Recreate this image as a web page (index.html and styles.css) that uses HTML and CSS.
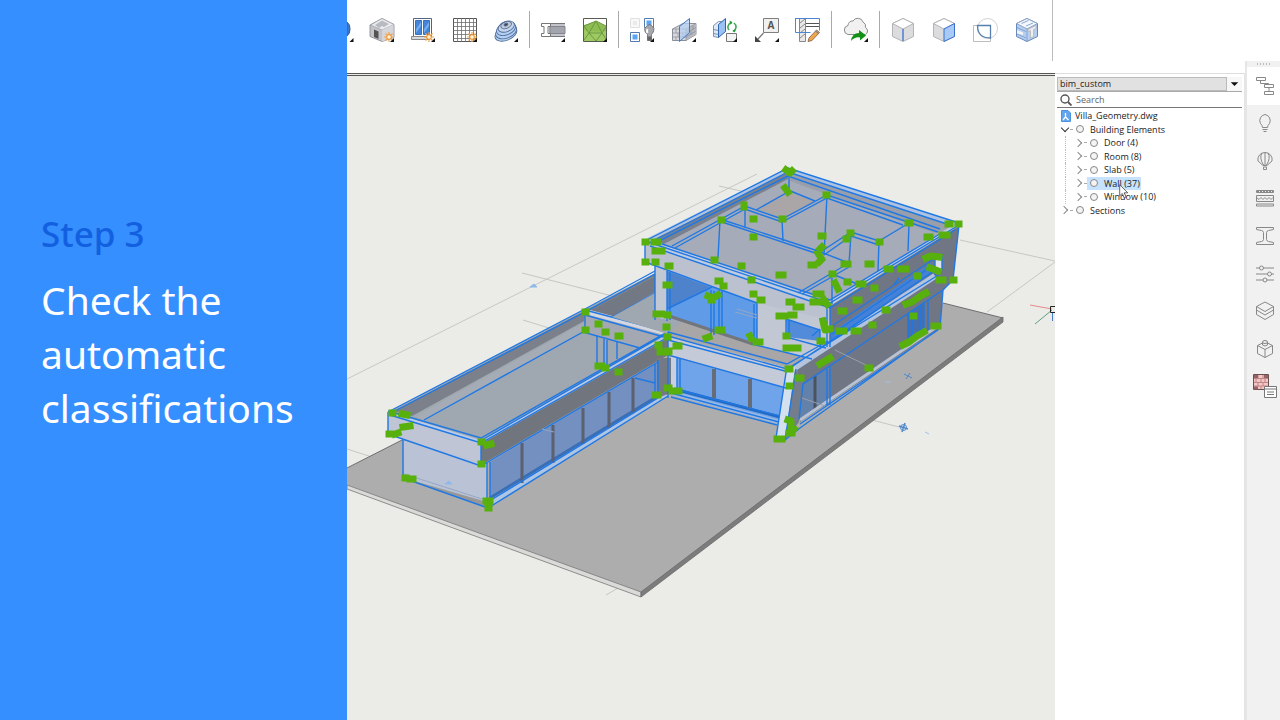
FILE: index.html
```html
<!DOCTYPE html>
<html lang="en">
<head>
<meta charset="utf-8">
<title>Step 3 – Check the automatic classifications</title>
<link rel="stylesheet" href="styles.css">
</head>
<body>
<svg class="defs" aria-hidden="true">
  <defs>
    <symbol id="tri" viewBox="0 0 26 26"><path d="M25 21v4h-4z" fill="#111"/></symbol>
    <symbol id="spark" viewBox="0 0 10 10"><path d="M5 0v10M0 5h10M1.500 1.500l7 7M8.500 1.500l-7 7" stroke="#f2a34a" stroke-width="1.200"/><circle cx="5" cy="5" r="2.300" fill="#fff4d8" stroke="#eb8f2c"/></symbol>
  </defs>
</svg>
<div class="page">
  <aside class="caption">
    <p class="step">Step 3</p>
    <h1 class="title">Check the automatic classifications</h1>
  </aside>
  <main class="app">
    <div class="toolbar" role="toolbar" aria-label="BIM tools">
      <button class="tool tool-cut" aria-label="Previous tool"><svg viewBox="0 0 14 26"><path d="M0 5a8 8 0 0 1 3 7a8 8 0 0 1-3 7z" fill="#3b78c8" stroke="#3d5f93"/><path d="M6.500 21v4h-4z" fill="#111"/></svg></button>
      <button class="tool" aria-label="Room"><svg viewBox="0 0 26 26"><path d="M1 8L13 1.500l12 6v13l-12 4-12-5z" fill="#c3c4ca" stroke="#85878f" stroke-width=".8"/><path d="M1.500 8l11.500 5 12-5.500-12-6z" fill="#ececef" stroke="#9a9ca3" stroke-width=".7"/><path d="M6 8l7-4.500v5.500l-3 2zM13 3.500l7 3.500-5 3-2-1z" fill="#b8bac2"/><path d="M13 13v11.500l11.500-4V7.500z" fill="#d5d6dc"/><path d="M5 20v-7.500l4.500 2v7.500z" fill="#565252"/><use href="#spark" x="15" y="15" width="10" height="10"/><use href="#tri"/></svg></button>
      <button class="tool" aria-label="Window"><svg viewBox="0 0 26 26"><path d="M3.500 1.500h18v18h-18z" fill="#fff" stroke="#53657f"/><path d="M5.500 3.500h6v14h-6zM13.500 3.500h6v14h-6z" fill="#4385d9" stroke="#3a70b9"/><path d="M6 12l5-7v4l-5 7zM14 12l5-7v4l-5 7z" fill="#76adf0"/><path d="M1.500 19.500h18v3h-18z" fill="#d8d9de" stroke="#888"/><use href="#spark" x="14" y="15" width="10" height="10"/><use href="#tri"/></svg></button>
      <button class="tool" aria-label="Grid"><svg viewBox="0 0 26 26"><path d="M1.500 1.500h23v23h-23z" fill="#fff" stroke="#555"/><path d="M5.500 1v24M9.500 1v24M13.500 1v24M17.500 1v24M21.500 1v24M1 5.500h24M1 9.500h24M1 13.500h24M1 17.500h24M1 21.500h24" stroke="#6d6d6d" stroke-width=".8"/><use href="#spark" x="15" y="15" width="10" height="10"/><use href="#tri"/></svg></button>
      <button class="tool" aria-label="Terrain"><svg viewBox="0 0 26 26"><g fill="#b4cff3" stroke="#506e98" stroke-width=".9" transform="rotate(-22 13 13)"><ellipse cx="11.500" cy="16.500" rx="11.500" ry="6.500"/><ellipse cx="12.500" cy="14.500" rx="11" ry="6.500"/><ellipse cx="13.500" cy="12" rx="10" ry="6"/><ellipse cx="14.500" cy="10" rx="8.500" ry="5" fill="#c5d6ee"/><ellipse cx="15" cy="8.500" rx="5.500" ry="3.300" fill="#c3cad5"/><ellipse cx="15" cy="8" rx="2" ry="1.200" fill="#444"/></g><use href="#tri"/></svg></button>
      <span class="sep"></span>
      <button class="tool" aria-label="Profile"><svg viewBox="0 0 26 26"><path d="M9 6h16v14H9z" fill="#c4c5ca"/><path d="M9 6.500h16M9 19.500h16" stroke="#75767c"/><path d="M10 9.500h15v7H10z" fill="#a3a5ae" stroke="#84858c"/><path d="M1.500 6.500h9v3H8v7h2.500v3h-9v-3H4v-7H1.500z" fill="#fff" stroke="#777"/><use href="#tri"/></svg></button>
      <button class="tool" aria-label="Topography"><svg viewBox="0 0 26 26"><path d="M1.500 1.500h23v23h-23z" fill="#fff" stroke="#565d50"/><path d="M2 8l4-1 8-3 10 5v15H2z" fill="#8ebd53"/><path d="M2 13q10 3 22 1v10H2z" fill="#9fca63"/><path d="M2 9l5 7L14 4l6 12 4-6M7 16h13M2 23l5-7 7 8 6-8 4 6M2 9l12-5 10 5" fill="none" stroke="#6b9a3f"/><use href="#tri"/></svg></button>
      <span class="sep"></span>
      <button class="tool" aria-label="Match properties"><svg viewBox="0 0 26 26"><path d="M1.500 1.500h9v9h-9z" fill="#f8f8f8" stroke="#e0e0e0"/><path d="M4 4h4v4H4z" fill="#eaeaea"/><path d="M1.500 15.500h9v9h-9zM15.500 1.500h9v9h-9z" fill="#fff" stroke="#547bb0"/><path d="M3.500 17.500h5v5h-5zM17.500 3.500h5v5h-5z" fill="#5ba3f3"/><path d="M18.500 8.500q2-2 4 0l2.500 3q0 4-2.500 6v6h-4v-6q-3-2-3-6z" fill="#a6a8ad" stroke="#66686c" stroke-width=".8"/><path d="M18.500 12q-1 2 0 4" stroke="#fff" stroke-width="2" fill="none"/><path d="M18.500 19.500h4v4h-4z" fill="#666"/><use href="#tri"/></svg></button>
      <button class="tool" aria-label="Split wall"><svg viewBox="0 0 26 26"><path d="M1.500 12L12 6.500h13v11L15 23.500H1.500z" fill="#d7d8dc" stroke="#767983" stroke-width=".8"/><path d="M15 12l10-5.500v11l-10 6z" fill="#b5b8c0"/><path d="M1.500 12H15l10-5.500M15 12v11.500M1.500 16H15l10-5.500M1.500 20H15l10-6M5 12v4M7 16v4M12 16v4M5 20v3.500M18 11v4M22 8.500v4M20 14v4" fill="none" stroke="#8b8e98" stroke-width=".7"/><path d="M8.500 9.500l10-8v14l-10 9z" fill="#b5d2f6" fill-opacity=".7" stroke="#3c7bc4"/><use href="#tri"/></svg></button>
      <button class="tool" aria-label="Flip wall"><svg viewBox="0 0 26 26"><path d="M1.500 8.500l5-4h6l-6 5v11l-5-1zM1.500 12.500l5 1M1.500 16.500l5 1" fill="#e0e8f4" stroke="#6c88b2" stroke-width=".9"/><path d="M6.500 7.500l7-6v13l-7 6z" fill="#9cc2f5" stroke="#2f65aa"/><path d="M17 13q-2.500-3 .5-6.500l2-1M22 6q3.500 3 1 7l-2 1.500" fill="none" stroke="#3cab50" stroke-width="1.500"/><path d="M17.500 3.500l3 1.700-2 2.500zM23.500 12l-3 1.500 2.500 2z" fill="#23993a"/><path d="M14.500 16.500h10v8h-10z" fill="#f4f4f4" stroke="#777"/><use href="#tri"/></svg></button>
      <button class="tool" aria-label="Tag"><svg viewBox="0 0 26 26"><path d="M9.500 1.500h15v14h-15z" fill="#f0f0f0" stroke="#808080"/><path d="M9.500 16L4 22" stroke="#777" stroke-width="1.200"/><path d="M1 19l6 6H1z" fill="#454545"/><text x="17" y="12" text-anchor="middle" class="tag-letter">A</text><use href="#tri"/></svg></button>
      <button class="tool" aria-label="Edit details"><svg viewBox="0 0 26 26"><path d="M4.500 1.500h6v23h-6z" fill="#e8e8e8" stroke="#888"/><path d="M5 6l5-4M5 11l5-4M5 16l5-4M5 21l5-4" stroke="#888"/><path d="M11 6.500h14M11 9.500h14" stroke="#555" stroke-width="1.200"/><path d="M.500 1.500h24v12M.500 1v14.500h15" fill="none" stroke="#4b86d2"/><path d="M14 21l7.500-8 3 2.500-7.500 8-4 1z" fill="#f0a64e" stroke="#7b5b3e" stroke-width=".8"/><path d="M20.500 14l3 2.500" stroke="#888" stroke-width="1.500"/></svg></button>
      <span class="sep"></span>
      <button class="tool" aria-label="Publish to cloud"><svg viewBox="0 0 26 26"><path d="M5 17.500a4.600 4.600 0 0 1 0-9a4.500 4.500 0 0 1 5-4.500a5.500 5.500 0 0 1 10 1a5 5 0 0 1 2.500 5.500a4 4 0 0 1 0 7z" fill="#f1f1f1" stroke="#8d8d8d"/><path d="M8 24q1-8 8-8v-3l7 5.500-6 5v-3q-5-1-9 3.500z" fill="#129116"/><use href="#tri"/></svg></button>
      <span class="sep"></span>
      <button class="tool" aria-label="Select edge"><svg viewBox="0 0 26 26"><path d="M13 1.500l10.500 5v13L13 24.500 2.500 19.500v-13z" fill="#dcdcde" stroke="#b4b4b8"/><path d="M13 1.500l10.500 5L13 12 2.500 6.500z" fill="#fff" stroke="#b4b4b8"/><path d="M13 12v12" stroke="#4379cf" stroke-width="1.400"/></svg></button>
      <button class="tool" aria-label="Select face"><svg viewBox="0 0 26 26"><path d="M13 1.500l10.500 5v13L13 24.500 2.500 19.500v-13z" fill="#dcdcde" stroke="#b4b4b8"/><path d="M13 1.500l10.500 5L13 12 2.500 6.500z" fill="#fff" stroke="#b4b4b8"/><path d="M13 12l10.500-5.500v13L13 24.500z" fill="#a9c9f7" stroke="#3970c9"/></svg></button>
      <button class="tool" aria-label="Select boundary"><svg viewBox="0 0 26 26"><circle cx="14.500" cy="11.500" r="10" fill="none" stroke="#d0d0d0"/><path d="M.500 8.500h17v16h-17z" fill="none" stroke="#bcbcbc"/><path d="M4.500 8.500h13v12.500q-13 0-13-12.500z" fill="none" stroke="#5580b0" stroke-width="1.300"/></svg></button>
      <button class="tool" aria-label="Select solid"><svg viewBox="0 0 26 26"><path d="M13 1.500l10.500 5v13L13 24.500 2.500 19.500v-13z" fill="#b6cef0" stroke="#6689bb"/><path d="M13 1.500l10.500 5L13 12 2.500 6.500z" fill="#f4f7fc" stroke="#8aa3c8"/><path d="M7.500 6.500l7-3M12 9l7-3M13 12v12M3 10.500l9 4M3 17l9 4" stroke="#7d9fcd" stroke-width=".9"/><path d="M14 12.500l8-4v3l-2.500 1v7l-3 1.500v-7.500l-2.500 1z" fill="#f0f0f0" stroke="#aaa" stroke-width=".6"/><path d="M3 13l6 2.500v2.500l-6-1.500z" fill="#f4f4f4"/></svg></button>
    </div>

    <section class="stage" aria-label="Model view">
      <svg class="model" viewBox="347 76 708 644" preserveAspectRatio="xMinYMin slice">
        <g fill="none" stroke="#c6c7c3">
          <path d="M347 379L757 174M522 273L632 301M523 320L585 339M719 186L745 192M960 240L1055 261M987 312L1055 262M347 449L372 457M868 419L903 428M606 595L618 588"/>
        </g>
        <path d="M347 468L404 439 700 300 943 303 1003 318 641 593 347 485z" fill="#adadad"/>
        <path d="M347 485L641 592v5L347 489z" fill="#dadbd8" stroke="#777" stroke-width=".8"/>
        <path d="M641 592L1003 317v5L641 597z" fill="#7c7c7c" stroke="#6a6a6a" stroke-width=".8"/>
        <path d="M347 468L404 439M943 303L1003 318" stroke="#6e6e6e" fill="none"/>

        <!-- long wing -->
        <path d="M388 412L655 273 668 334 481 441z" fill="#9fa7b0"/>
        <path d="M394 411L655 274v8L412 416z" fill="#7b808a"/>
        <path d="M592 310L655 277v15L612 317z" fill="#737984"/>
        <path d="M416 416L585 322 583 332 425 421z" fill="#a5acb5"/>
        <path d="M585 314L668 335 640 349 583 332z" fill="#a4a8b2"/>
        <path d="M590 310L668 331v5L585 314z" fill="#d3d7e2"/>
        <path d="M388 412L481 441v24L388 434z" fill="#bfc5d4"/>
        <path d="M403 440L487 464v42L404 478z" fill="#bac3d6"/>
        <path d="M404 478L487 502v6z" fill="#979797"/>
        <path d="M481 441L668 335v20L481 465z" fill="#70757e"/>
        <path d="M490 462L658 362v37L490 505z" fill="#7390c1"/>
        <path d="M490 499L668 391v5L490 507z" fill="#afc5e4"/>
        <path d="M490 498L658 396" stroke="#3a6eb5" stroke-width="3"/>
        <path d="M522 443v40M553 425v38M583 408v36M609 392v36M633 378v34" stroke="#5b616e" stroke-width="3"/>
        <path d="M657 358L671 358V393L657 398z" fill="#747983"/>
        <path d="M388 413L481 442 668 336" stroke="#bccbe6" stroke-width="3" fill="none"/>
        <g class="edges">
          <path d="M388 412L585 309 655 271M391 413L585 312 655 274M388 411L481 438 667 332M390 415L481 443 668 337M388 412v22M388 434L481 466 658 362M481 440v26M403 440v38L488 508M487 463v44M490 462v44M424 420L583 332 640 348M488 508L668 396M491 500L658 398M585 310L668 332M585 315L664 337M585 310v22M612 317L655 293M482 440L664 335"/>
          <path d="M597 336v30M604 339v28M607 340v26M617 341v18M658 360v38M655 364v35M635 378l20 5"/>
        </g>

        <!-- terrace and middle wing -->
        <path d="M668 334L655 290 830 290V346L787 367z" fill="#a9a6a8"/>
        <path d="M612 317L655 293 680 323 668 334z" fill="#9fa7b0"/>
        <path d="M668 336L788 368 786 388 668 356z" fill="#c5cad8"/>
        <path d="M671 357L786 388 779 420 671 393z" fill="#6fa4ea"/>
        <path d="M671 357h6v33l-6 3z" fill="#c9cfde"/>
        <path d="M674 389L780 417" stroke="#2469c0" stroke-width="3"/>
        <path d="M672 393L779 422" stroke="#9cb9e3" stroke-width="4"/>
        <path d="M714 369v30M750 379v30" stroke="#666d79" stroke-width="4"/>

        <!-- upper block, front -->
        <path d="M655 264L830 300v54L757 345v-42L668 272v48l-13-3z" fill="#c2c7d4"/>
        <path d="M667 271L757 303v42L667 317z" fill="#609be8"/>
        <path d="M667 271L710 287 667 309z" fill="#4e82ca"/>
        <path d="M669 316L753 344" stroke="#74767d" stroke-width="3"/>
        <path d="M645 241L830 305v22L757 303 645 262z" fill="#bcc1cf"/>
        <path d="M757 345L820 361 830 346V320L757 303z" fill="#c2c7d4"/>
        <path d="M786 319L820 330v11L787 337z" fill="#538bdb"/>
        <!-- upper block, top -->
        <path d="M645 241L788 169 959 224 830 304z" fill="#a5abb8"/>
        <path d="M650 240L788 171v8L664 244z" fill="#7b818c"/>
        <path d="M790 172L955 226 935 233 790 181z" fill="#989eaa"/>
        <path d="M756 210L788 190 815 201 782 219z" fill="#aaa5a7"/>
        <path d="M648 240L788 170 955 224" stroke="#afc3e1" stroke-width="4" fill="none"/>
        <path d="M650 243L830 304 955 227" stroke="#bfcbe0" stroke-width="5" fill="none"/>
        <!-- upper block, right side -->
        <path d="M830 306L959 226 953 280 943 290 940 328 800 422 797 368 830 345z" fill="#707684"/>
        <path d="M832 332L932 262v10L832 340z" fill="#4581d6"/>
        <path d="M935 259l7-4v13l-7 4z" fill="#dfe3ec"/>
        <path d="M793 369L935 276" stroke="#b4c4de" stroke-width="6"/>
        <path d="M803 384L830 366v37L799 420z" fill="#6481aa"/>
        <path d="M815 376v35" stroke="#4d535e" stroke-width="3"/>
        <path d="M830 366L943 290" stroke="#777d8a"/>
        <path d="M908 313l16-11v32l-16 11z" fill="#456fae"/>
        <path d="M800 420L938 326" stroke="#b8c2d2" stroke-width="3"/>
        <!-- leaning pier -->
        <path d="M795 369L804 383 799 422 785 440z" fill="#747d8b"/>
        <path d="M787 367h8L785 440l-9-2z" fill="#d5e0ef"/>

        <g class="edges">
          <path d="M645 241L788 168 959 223M649 243L788 172 953 226M655 243L788 176 940 229M645 241L830 303 959 225M650 246L830 308 955 230M662 244L830 300 943 232M645 241v21L757 303M655 266v54M667 271v50M670 272v48M667 309L712 287M757 303v42M754 304v40M711 290v46M714 291v44M719 290v44M722 290v40M830 305v42M827 307v40M959 225L953 280 943 290 940 328M786 319v18L826 348M786 319L820 330v16M789 320v16M812 336l8-7"/>
          <path d="M672 246L745 206 782 219 827 195 905 221 938 232M675 248L745 209 782 222 827 198 903 225M720 219L818 251 849 263 798 293M722 222L818 254M849 267L802 294M788 190L815 201M756 210L788 192M822 251L851 232 879 241 909 223M824 255L851 236 879 245M745 206v22M720 220l-2 38M789 176v14M782 219l1 22M827 195l-3 60M851 234l-2 30M879 241l-1 30M909 224l-1 27M832 274v30M832 274l28 11"/>
          <path d="M668 332L787 364 828 341M668 336L787 369 940 274M668 340L785 371M752 344L812 359M668 355L786 388M677 358v32M680 359v32M671 393L779 422M675 389L780 416M671 397L777 425M668 332v66M787 366L776 438 785 440 796 369M785 440L800 428 940 328M799 419L803 384 943 290M800 424L938 330M827 369v36M830 367v38M793 366L933 272M832 334L932 266M832 341L938 268M832 326L940 255M935 257v18M942 254v16M908 313v32M912 311v32M920 305v32M924 302v32M928 300v30M899 278l-6 8"/>
        </g>
        <path d="M835 350L870 367M802 398L825 406" stroke="#9a9fa8"/>
        <path d="M404 474L485 500M542 429l12 3M735 312l22 6M737 309l20 6" stroke="#94a7c4"/>

        <!-- grips -->
        <g class="grips">
          <path d="M392 413h1M402 414l5 1M403 427l7-1M389 434h1M395 434l3-1M481 442h1M487 445l4-1M481 464h1M405 478h1M410 479h3M486 501h4M488 508h1M585 312h1M585 330h1M598 324h1M605 332h1M618 336h2M598 366h4M605 368h1M618 372h1M658 345h1M676 346h3M668 351h1M655 395h3M667 388h2M672 391h7M656 314h6M667 315h1M666 327h1M667 337h1M660 352h8"/>
          <path d="M645 242h1M654 242h4M655 251h7M645 262h1M655 262h1M668 266h2M666 285h3M786 170l4 3 2-2M785 188l3 4M744 205v2M721 220h1M753 219h1M753 237h1M782 219h1M714 260h1M741 266h1M751 280h1M779 275h4M718 281h2M723 286h1M708 296l5 2 5-3M711 300h1M753 294h1M760 300h2M750 336l1 2M756 342h4M706 338l3-1M718 330h4M789 302h3M796 307h5M779 316h6M791 315h3M786 336h1M786 348h12"/>
          <path d="M826 195h1M850 233h1M846 239h1M879 242h1M908 223h2M948 224h2M958 224h1M927 237h3M942 235h5M821 236h2M820 249l2-2M818 253l3 5M821 260l-2 2M811 265h3M844 264h4M868 264h3M832 274h1M835 283l3 6M847 282h1M859 284h4M874 288h1M887 269h3M901 269h5M917 276h1M926 258l5-2 8 1M930 268l3 1 5 2M939 280h4M953 280h1M816 294h5M813 302h7M824 300l3 4M856 300h3M841 311h3M885 310h2M823 321l2 9 5-1M839 331h5M872 325h1M854 331h4M820 341h2M906 304l6-2 10-7 4-2M913 316h1M903 345l6-3 8-6 7-4M934 326h4M820 364l5-3 5-3M868 368h2M788 369h2M798 378h3M789 386h1M788 420l3 1 0 6 3 2M789 433h3M777 439h5"/>
        </g>
        <g fill="none" stroke="#4f88cc"><path d="M530 287l4-3 3 3zM445 484l4-3 3 3z" fill="#8fb8ec" stroke="#8fb8ec"/><path d="M904 374l8 4M910 373l-4 6"/><path d="M885 382h6M925 432l4 2" stroke="#a5bfe0"/><circle cx="903.500" cy="427.500" r="3"/><path d="M899 426l9 3M905 423l-3 9" stroke-width="1.500"/></g>
        <path d="M1030 305l22 4" stroke="#e68989"/><path d="M1035 324l17-14" stroke="#5aa17f"/><path d="M1052.500 312v9" stroke="#487ccc"/><path d="M1050.500 306.500h5v6h-5z" fill="none" stroke="#222"/>
      </svg>
    </section>

    <section class="panel" aria-label="Structure">
      <div class="picker">
        <select class="config" aria-label="Structure configuration"><option>bim_custom</option></select>
        <svg class="caret" viewBox="0 0 16 14" aria-hidden="true"><path d="M4 5h8l-4 4z" fill="#111"/></svg>
      </div>
      <div class="search">
        <svg class="lens" viewBox="0 0 12 12" aria-hidden="true"><circle cx="5" cy="5" r="4" fill="none" stroke="#555" stroke-width="1.400"/><path d="M8 8l3.500 3.500" stroke="#555" stroke-width="1.800"/></svg>
        <input class="query" type="text" placeholder="Search" aria-label="Search">
      </div>
      <ul class="tree">
        <li class="row file"><svg class="doc" viewBox="0 0 10 12"><path d="M.500.500h6.500l2.500 2.500v8.500h-9z" fill="#61a5ee" stroke="#4d92dd"/><path d="M4.500 3v4L2 10M4.500 7L7.500 10" stroke="#fff" stroke-width="1.300" fill="none"/></svg><span>Villa_Geometry.dwg</span></li>
        <li class="row"><button class="twist open" aria-label="Collapse"></button><i class="dash"></i><i class="node"></i><span>Building Elements</span></li>
        <li class="row child"><button class="twist" aria-label="Expand"></button><i class="dash"></i><i class="node"></i><span>Door (4)</span></li>
        <li class="row child"><button class="twist" aria-label="Expand"></button><i class="dash"></i><i class="node"></i><span>Room (8)</span></li>
        <li class="row child"><button class="twist" aria-label="Expand"></button><i class="dash"></i><i class="node"></i><span>Slab (5)</span></li>
        <li class="row child picked"><button class="twist" aria-label="Expand"></button><i class="dash"></i><i class="node"></i><span>Wall (37)</span>
          <svg class="pointer" viewBox="0 0 10 15" aria-hidden="true"><path d="M.700.800v11l2.600-2.300 1.900 4.300 1.900-.8-1.900-4.200h3.600z" fill="#fff" stroke="#444" stroke-width=".8"/></svg></li>
        <li class="row child"><button class="twist" aria-label="Expand"></button><i class="dash"></i><i class="node"></i><span>Window (10)</span></li>
        <li class="row"><button class="twist" aria-label="Expand"></button><i class="dash"></i><i class="node"></i><span>Sections</span></li>
      </ul>
    </section>

    <nav class="rail" aria-label="Panels">
      <div class="handle"></div>
      <div class="tabs">
        <button class="tab active" aria-label="Structure"><svg viewBox="0 0 20 20"><path d="M1.500 1.500h9v3h-9zM9.500 8.500h9v3h-9zM9.500 15.500h9v3h-9zM5.500 4.500v3h8v1M14 11.500v4"/></svg></button>
        <button class="tab" aria-label="Tips"><svg viewBox="0 0 20 20"><path d="M7.500 14.500q0-2-2-4A6.200 6.200 0 0 1 10 1.500a6.200 6.200 0 0 1 4.500 9q-2 2-2 4zM7.500 16.500h5M8.500 18.500h3"/></svg></button>
        <button class="tab" aria-label="Environment"><svg viewBox="0 0 20 20"><path d="M8 14.500L3 10A7 7 0 0 1 10 1.500a7 7 0 0 1 7 8.500l-5 4.500zM8.500 14Q4 7 7 2M11.500 14Q16 7 13 2M10 1.500v13M8.500 16h3v2.500h-3z"/></svg></button>
        <button class="tab" aria-label="Compositions"><svg viewBox="0 0 20 20"><path d="M1.500 2.500h17v2h-17zM1.500 7.500h17v6h-17zM1.500 16h17v2h-17zM2 10l2 1.500L6 9.500l2 2L10 9.500l2 2 2-2 2 2 2-2"/><path d="M2 3.500h16" stroke-dasharray="2 1"/></svg></button>
        <button class="tab" aria-label="Profiles"><svg viewBox="0 0 20 20"><path d="M1.500 1.500h17v2l-5 1q-2 .5-2 2v7q0 1.500 2 2l5 1v2h-17v-2l5-1q2-.5 2-2v-7q0-1.500-2-2l-5-1z"/></svg></button>
        <button class="tab" aria-label="Properties"><svg viewBox="0 0 20 20"><path d="M1 4h3.500M8.500 4H19M1 10h11.500M16.500 10H19M1 16h7M12 16h7"/><circle cx="6.500" cy="4" r="2"/><circle cx="14.500" cy="10" r="2"/><circle cx="10" cy="16" r="2"/></svg></button>
        <button class="tab" aria-label="Layers"><svg viewBox="0 0 20 20"><path d="M10 1l8.500 4.500L10 10.500 1.500 5.500zM1.500 5.500v3.500l8.500 5 8.500-5V5.500M1.500 9v4.500l8.500 5 8.500-5V9"/></svg></button>
        <button class="tab" aria-label="Components"><svg viewBox="0 0 20 20"><path d="M7.500 4L2.500 6.500v8L10 18.500l7.500-4v-8l-5-2.500M2.500 6.500L10 10.500l7.500-4M10 10.500v8M7.500 3v3q2.500 2 5 0V3"/><ellipse cx="10" cy="3" rx="2.500" ry="1.500"/></svg></button>
        <button class="tab" aria-label="Materials"><svg class="wide" viewBox="0 0 26 26"><path d="M1.500 1.500h15v15h-15z" fill="#f1c7c7" stroke="#6a5050"/><path d="M2 5.500h14M2 9.500h14M2 13h14M6 2v3.500M11 2v3.500M4 6v3.500M9 6v3.500M13 6v3.500M6 10v3M11 10v3M9 13v3" stroke="#c48484"/><path d="M2 2h4v3H2zM12 2h4v3h-4zM2 13.500h4v3H2z" fill="#956464" stroke="none"/><path d="M12.500 13.500h12v11h-12zM12.500 16h12M15 19h7M15 21.500h7" fill="#fff" stroke="#777"/></svg></button>
      </div>
    </nav>
  </main>
</div>
</body>
</html>
```
FILE: styles.css
```css
* { box-sizing: border-box; }
body { margin: 0; font-family: "Open Sans", "Noto Sans", sans-serif; }
button { border: 0; padding: 0; background: none; font: inherit; }
.defs { display: none; }

.page { display: flex; min-height: 100vh; background: #fff; overflow: hidden; }

.caption { flex: 0 0 347px; padding: 207px 41px 0; background: #368fff; font-family: "Noto Sans", "Open Sans", sans-serif; }
.step { margin: 0; font-size: 35px; line-height: 53px; font-weight: 500; color: #1260df; }
.title { margin: 13px 0 0; font-size: 39px; line-height: 54px; font-weight: 400; color: #fff; }

.app {
  flex: 1;
  min-width: 0;
  display: grid;
  grid-template-columns: minmax(0, 1fr) 190px 35px;
  grid-template-rows: 61px 1fr;
}

.toolbar {
  grid-column: 1;
  display: flex;
  align-items: center;
  margin-right: 2px;
  padding: 0 4px 2px 0;
  border-right: 1px solid #bcbcbc;
}
.tool { flex: 1 1 0; min-width: 0; display: flex; justify-content: center; }
.tool svg { width: 26px; height: 26px; }
.tool-cut { flex: 0 0 14px; }
.tool-cut svg { width: 14px; }
.tag-letter { font: 700 10px "Open Sans", sans-serif; fill: #555; }
.sep { flex: 0 0 6px; height: 37px; display: flex; justify-content: center; }
.sep::before { content: ""; width: 1px; background: #a9a9a9; }

.stage {
  grid-column: 1;
  grid-row: 2;
  position: relative;
  margin-top: 12px;
  border-top: 3px double #555;
  background: #ebece8;
  overflow: hidden;
}
.model { display: block; width: 100%; height: 100%; }
.edges { fill: none; stroke: #1f78e4; stroke-width: 1.4; }
.grips { fill: none; stroke: #58b00c; stroke-width: 7; stroke-linecap: square; stroke-linejoin: round; }

.panel {
  grid-column: 2;
  grid-row: 2;
  margin-top: 12px;
  padding: 3px 2px 0 2px;
  border-top: 1px solid #ddd;
  border-right: 1px solid #e4e4e4;
  font-size: 9px;
  color: #222;
}
.picker { display: grid; grid-template-columns: 1fr 15px; border-bottom: 1px solid #aaa; }
.config {
  appearance: none;
  height: 14px;
  margin: 0;
  padding: 0 0 0 2px;
  border: 1px solid #bbb;
  border-radius: 0;
  background: #e1e1e1;
  color: #222;
  font: inherit;
  line-height: 12px;
}
.caret { width: 15px; height: 14px; background: #f7f7f7; }
.search { display: flex; align-items: center; gap: 4px; height: 16px; padding-left: 3px; border-bottom: 1px solid #777; }
.lens { width: 12px; height: 12px; }
.query { flex: 1; min-width: 0; height: 14px; padding: 0; border: 0; outline: 0; background: none; font: inherit; color: #222; }
.query::placeholder { color: #666; opacity: 1; }

.tree { display: grid; grid-auto-rows: 1fr; height: 108px; margin: 1px 0 0; padding: 0; list-style: none; }
.row { position: relative; display: flex; align-items: center; padding-left: 3px; white-space: nowrap; }
.file { padding-left: 4px; gap: 4px; }
.doc { width: 10px; height: 12px; }
.child { padding-left: 17px; }
.child::before { content: ""; position: absolute; left: 8px; top: 0; bottom: 0; border-left: 1px dotted #bbb; }
.twist { width: 9px; height: 12px; display: grid; place-items: center; }
.twist::before { content: ""; width: 5px; height: 5px; margin-right: 2px; border: solid #888; border-width: 1px 1px 0 0; transform: rotate(45deg); }
.twist.open::before { margin: 0 0 3px; border-color: #333; transform: rotate(135deg); }
.dash { width: 3px; height: 1px; margin: 0 3px 0 1px; background: #aaa; }
.node { width: 8px; height: 8px; margin-right: 6px; border: 1px solid #888; border-radius: 50%; background: #f4f4f4; }
.picked { background: linear-gradient(#c7e2fc, #c7e2fc) 30px 0 / 54px 100% no-repeat; }
.pointer { position: absolute; left: 62px; top: 7px; z-index: 2; width: 10px; height: 15px; }

.rail { grid-column: 3; grid-row: 2; border-left: 2px solid #e6e6e6; background: #f1f1f1; }
.handle { height: 6px; background: radial-gradient(circle, #bbb 1px, transparent 1px) 0 0 / 3px 6px; margin: 0 9px; }
.tabs { display: grid; grid-auto-rows: 1fr; height: 338px; }
.tab { display: grid; place-items: center; padding-left: 2px; }
.tab.active { background: #fff; }
.tab svg { width: 20px; height: 20px; fill: none; stroke: #888; stroke-width: 1; }
.tab .wide { width: 26px; height: 26px; }
```
